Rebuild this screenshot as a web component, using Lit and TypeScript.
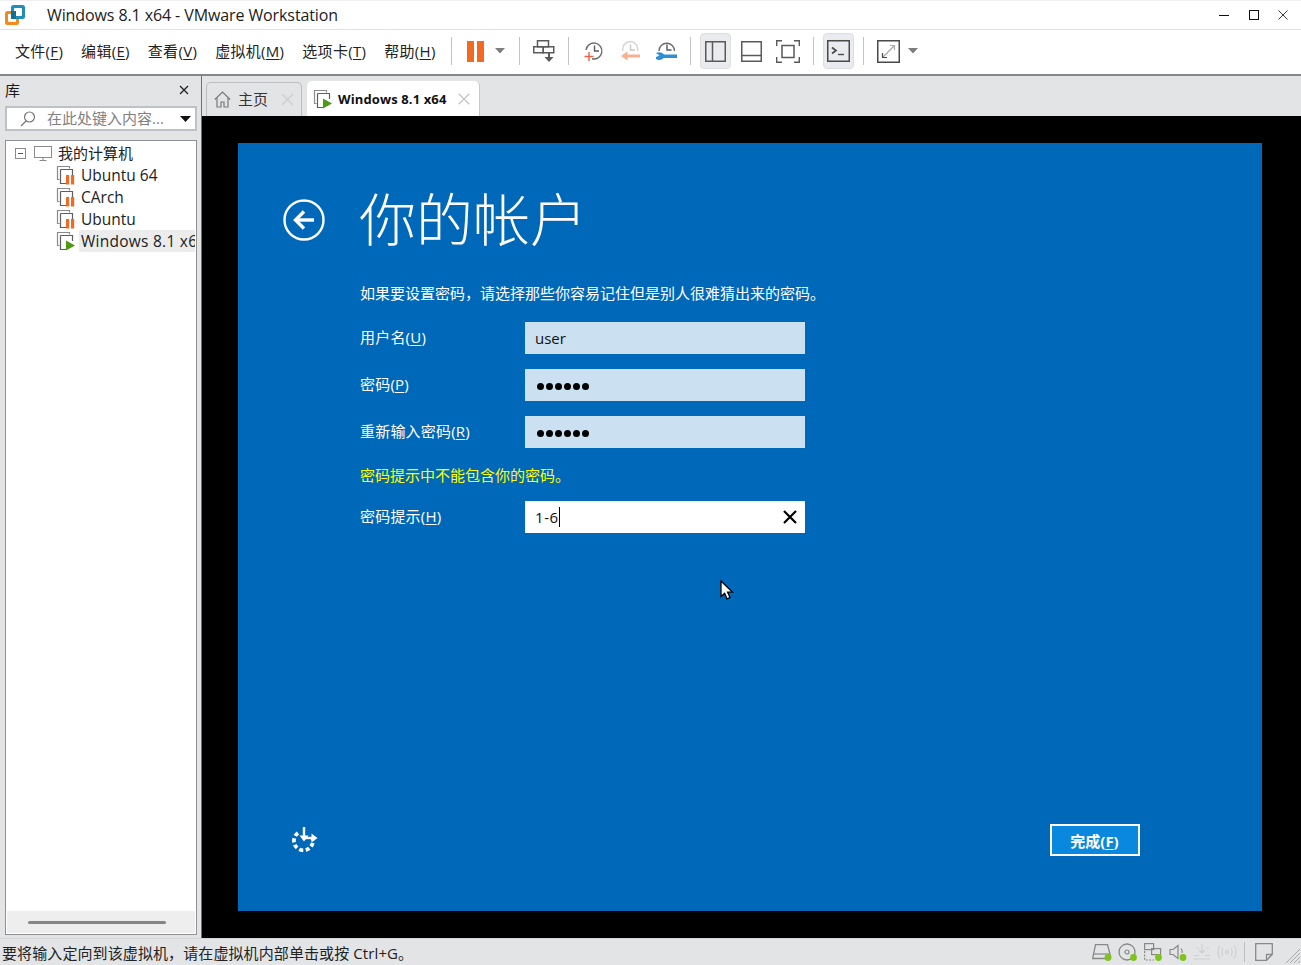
import { LitElement, html, css, svg } from "lit";
import { customElement } from "lit/decorators.js";

const vmIcon = (running: boolean) => html`<svg class="vmi" width="20" height="20" viewBox="0 0 20 20" fill="none">
  <path d="M3.5 14.5H1.5V1.5H13.5V3.5" stroke="#8a8a8a" stroke-width="1.2"/>
  <path d="M4.5 4.5H16.5V10M4.5 4.5V18.5H10" stroke="#5f5f5f" stroke-width="1.2"/>
  ${running
    ? svg`<path d="M10 9.5L19 14.5L10 19.5Z" fill="#4c9a12"/>`
    : svg`<rect x="10" y="10" width="3.2" height="9.5" fill="#f26a21"/><rect x="15" y="10" width="3.2" height="9.5" fill="#f26a21"/>`}
</svg>`;

const caret = html`<svg width="10" height="6" viewBox="0 0 10 6"><path d="M0 0H10L5 5.5Z" fill="#7d7d7d"/></svg>`;

@customElement("app-root")
export class AppRoot extends LitElement {
  static styles = css`
    :host { display: block; width: 1301px; height: 965px; overflow: hidden; background: #e3e4e6; color: #1a1a1a;
      font-family: "Open Sans", "Noto Sans CJK SC", sans-serif; font-size: 15px; }
    * { box-sizing: border-box; }
    svg { display: block; flex: none; }
    u { text-underline-offset: 2px; text-decoration-thickness: 1px; }
    .win { display: grid; grid-template-rows: 30px 46px 862px 27px; height: 965px; }

    .title { background: #fff; border-top: 1px solid #f0f0f0; border-bottom: 1px solid #e2e2e2; display: flex; align-items: center; padding: 0 0 0 5px; }
    .title .logo { margin-right: 22px; }
    .title .name { flex: 1; font-size: 16px; letter-spacing: -0.1px; color: #1c1c1c; }
    .winbtns { display: flex; align-items: center; padding-right: 13px; }
    .winbtns svg { margin-left: 20px; }
    .winbtns svg:last-child { margin-left: 19px; }

    .tools { background: #fff; border-bottom: 2px solid #85868a; display: flex; align-items: center; padding-left: 15px; padding-bottom: 2px; }
    .menu { display: flex; gap: 18px; width: 423px; white-space: nowrap; line-height: 20px; color: #222; letter-spacing: .3px; }
    .sep { width: 1px; height: 28px; background: #c4c4c4; margin: 0 13px; flex: none; }
    .pause { display: flex; align-items: center; gap: 11px; width: 41px; padding-left: 2px; }
    .hist { display: flex; align-items: center; gap: 16px; width: 95px; padding-left: 2px; }
    .view { display: flex; align-items: center; margin-left: -4px; }
    .on { width: 31px; height: 36px; background: #e9ebee; border: 1px solid #dcdee0; border-radius: 4px; display: flex; align-items: center; justify-content: center; }
    .g1 { margin-left: 10px; }
    .g2 { margin-left: 14px; }
    .onsolo { margin: 0 -4px; }
    .full { display: flex; align-items: center; gap: 8px; }

    .body { display: grid; grid-template-columns: 201px 1fr; min-height: 0; }
    .side { display: flex; flex-direction: column; padding: 0 4px 3px 5px; min-height: 0; }
    .side-h { height: 30px; display: flex; align-items: center; justify-content: space-between; padding: 0 8px 3px 0; }
    .search { height: 25px; border: 2px solid #bfc1c4; background: #fff; display: flex; align-items: center; padding-left: 13px; color: #7f8184; }
    .search span { margin: 0 0 2px 11px; flex: 1; white-space: nowrap; line-height: 20px; }
    .search svg:last-child { margin-right: 4px; }
    .tree { margin-top: 9px; flex: 1; border: 1px solid #8e9094; background: #fff; display: flex; flex-direction: column; min-height: 0; padding-top: 1px; overflow: hidden; }
    .treelist { flex: 1; }
    .row { height: 22px; display: flex; align-items: center; white-space: nowrap; overflow: hidden; padding-left: 50px; color: #222; }
    .row.root { padding-left: 9px; }
    .row.root svg:first-child { margin-right: 8px; }
    .row.root svg:nth-child(2) { margin-right: 6px; }
    .row.root span { margin-bottom: 2px; }
    .row .lbl { margin-left: 3px; padding-left: 2px; flex: 1; height: 22px; line-height: 22px; overflow: hidden; font-size: 15.5px; }
    .row .lbl.sel { background: #ececec; margin-right: 1px; letter-spacing: .25px; }
    .hscroll { height: 22px; margin: 0 1px 1px; background: #eeeeee; display: flex; align-items: center; padding-left: 21px; }
    .thumb { width: 138px; height: 3px; border-radius: 2px; background: #868686; }

    .main { border-left: 1px solid #6e6f71; display: flex; flex-direction: column; min-height: 0; }
    .tabs { height: 40px; display: flex; align-items: flex-end; gap: 5px; padding-left: 4px; }
    .tab { display: flex; align-items: center; border-radius: 5px 5px 0 0; }
    .tab.home { width: 96px; height: 34px; border: 1px solid #bcbdc0; border-bottom: 0; padding-left: 7px; color: #333; }
    .tab.home span { margin: 0 13px 3px 7px; }
    .tab.act { width: 173px; height: 35px; background: #fff; padding-left: 6px; border-right: 1px solid #c8c8c8; }
    .tab.act span { font: 700 13px "Open Sans", sans-serif; margin: 0 12px 0 5px; white-space: nowrap; letter-spacing: .12px; color: #111; }

    .stage { flex: 1; background: #000; padding: 27px 39px 27px 36px; min-height: 0; }
    .blue { position: relative; height: 768px; background: #0068b8; color: #fff; padding: 40px 0 0 45px; display: flex; flex-direction: column; }
    .head { display: flex; align-items: center; height: 74px; }
    .head h1 { margin: 0 0 8px 34px; font-weight: 300; font-size: 57px; line-height: 74px; color: #fff; font-family: "Noto Sans CJK SC", sans-serif; }
    .content { margin-left: 77px; }
    .intro { margin: 24px 0 0; line-height: 24px; white-space: nowrap; }
    .field { display: flex; align-items: center; height: 32px; margin-top: 15px; }
    .first { margin-top: 17px; }
    .field label { width: 165px; white-space: nowrap; line-height: 20px; margin-bottom: 2px; letter-spacing: .2px; }
    .input { width: 280px; height: 32px; background: #cbe0f1; color: #111; display: flex; align-items: center; padding: 0 10px; line-height: 20px; }
    .input.white { background: #fff; justify-content: space-between; padding-right: 8px; }
    .dots { display: flex; gap: 2px; margin: 2px 0 0 2px; }
    .dots i { width: 7px; height: 7px; border-radius: 50%; background: #000; }
    .caretline { border-right: 1px solid #000; height: 20px; letter-spacing: .6px; display: inline-block; }
    .warn { color: #ffff00; height: 24px; line-height: 24px; margin-top: 15px; white-space: nowrap; }
    .warn + .field { margin-top: 14px; }
    .foot { margin-top: auto; display: flex; align-items: center; justify-content: space-between; padding: 0 122px 55px 8px; }
    .done { width: 90px; height: 32px; background: #0a88e0; border: 2px solid #fff; color: #fff; display: flex; align-items: center; justify-content: center; font-weight: 700; }
    .done span { margin-right: 1px; }
    .cursor { position: absolute; left: 482px; top: 437px; }

    .status { display: flex; align-items: center; padding-left: 2px; border-top: 1px solid #d5d5d5; color: #222; }
    .status .msg { flex: 1; white-space: nowrap; letter-spacing: .1px; }
    .sicons { display: flex; align-items: center; gap: 6px; }
    .sicons .line { width: 1px; height: 20px; background: #bdbdbd; margin: 0 1px; }
    .sicons .note { margin-left: 3px; }
    .grip { margin: 7px 1px 0 12px; }
  `;

  render() {
    return html`<div class="win">
      <div class="title">
        <svg class="logo" width="20" height="20" viewBox="0 0 20 20">
          <rect x="0" y="6" width="14" height="14" rx="2.5" fill="#f28a1e"/>
          <rect x="6" y="0" width="14" height="14" rx="2.5" fill="#1f8fb8"/>
          <rect x="9" y="3" width="8" height="8" rx="1" fill="#fff"/>
          <path d="M3 9H6V14H11V17H4.5A1.5 1.5 0 0 1 3 15.5Z" fill="#fff"/>
          <rect x="6" y="6" width="5" height="8" fill="#0e6f98"/>
        </svg>
        <div class="name">Windows 8.1 x64 - VMware Workstation</div>
        <div class="winbtns">
          <svg width="10" height="10" viewBox="0 0 10 10"><path d="M0 5.5H10" stroke="#111" stroke-width="1"/></svg>
          <svg width="10" height="10" viewBox="0 0 10 10" fill="none"><rect x=".5" y=".5" width="9" height="9" stroke="#111"/></svg>
          <svg width="10" height="10" viewBox="0 0 10 10"><path d="M.5 .5L9.5 9.5M9.5 .5L.5 9.5" stroke="#222" stroke-width=".9"/></svg>
        </div>
      </div>

      <div class="tools">
        <div class="menu">
          <span>文件(<u>F</u>)</span><span>编辑(<u>E</u>)</span><span>查看(<u>V</u>)</span><span>虚拟机(<u>M</u>)</span><span>选项卡(<u>T</u>)</span><span>帮助(<u>H</u>)</span>
        </div>
        <div class="sep"></div>
        <div class="pause">
          <svg width="17" height="21" viewBox="0 0 17 21"><rect width="7" height="21" fill="#f26a21"/><rect x="10" width="7" height="21" fill="#f26a21"/></svg>
          ${caret}
        </div>
        <div class="sep"></div>
        <svg width="22" height="22" viewBox="0 0 22 22" fill="none" stroke="#5a5a5a" stroke-width="1.5">
          <rect x="4.5" y=".75" width="11" height="6"/><rect x=".75" y="6.75" width="9.5" height="6"/><rect x="10.25" y="6.75" width="10.5" height="6"/>
          <path d="M16 13V18" stroke-width="2"/><path d="M11.5 17H20.5L16 22Z" fill="#5a5a5a" stroke="none"/>
        </svg>
        <div class="sep"></div>
        <div class="hist">
          <svg width="20" height="20" viewBox="0 0 20 20" fill="none">
            <path d="M2 9A8 8 0 1 1 8 17.8" stroke="#6a6a6a" stroke-width="1.4"/><path d="M10.5 4.5V10H15" stroke="#5a5a5a" stroke-width="1.4"/>
            <path d="M5 11V20M.5 15.5H9.5" stroke="#e8643c" stroke-width="1.4"/>
          </svg>
          <svg width="20" height="20" viewBox="0 0 20 20" fill="none">
            <path d="M3 10A7.5 7.5 0 1 1 17.5 10" stroke="#d4d4d4" stroke-width="1.4"/><path d="M10.5 3.5V9H15" stroke="#c8c8c8" stroke-width="1.4"/>
            <path d="M20 15H6" stroke="#f9b08f" stroke-width="3"/><path d="M7.5 10.5L1 15L7.5 19.5Z" fill="#f9b08f"/>
          </svg>
          <svg width="21" height="20" viewBox="0 0 21 20" fill="none">
            <path d="M3 10A7.5 7.5 0 1 1 18.5 10" stroke="#6a6a6a" stroke-width="1.4"/><path d="M11 3.5V9H15.5" stroke="#5a5a5a" stroke-width="1.4"/>
            <path d="M5 13.5H21V17H5Z" fill="#2d8fd5"/><path d="M0 12L3.5 14.5L0 16V18C3 20 7 19 8 16V13.5C6 11 2 10.5 0 12Z" fill="#2d8fd5"/>
          </svg>
        </div>
        <div class="sep"></div>
        <div class="view">
          <div class="on">
            <svg width="21" height="21" viewBox="0 0 21 21" fill="none" stroke="#5a5a5a" stroke-width="1.5"><rect x=".75" y=".75" width="19.5" height="19.5"/><path d="M7.5 1V20"/></svg>
          </div>
          <svg class="g1" width="21" height="21" viewBox="0 0 21 21" fill="none" stroke="#5a5a5a" stroke-width="1.5"><rect x=".75" y=".75" width="19.5" height="19.5"/><path d="M1 14.5H20"/></svg>
          <svg class="g2" width="24" height="23" viewBox="0 0 24 23" fill="none" stroke="#5a5a5a" stroke-width="1.4"><path d="M.7 6V.7H6M18 .7H23.3V6M.7 17V22.3H6M18 22.3H23.3V17"/><rect x="6" y="5.5" width="12" height="12" stroke-width="1.5"/></svg>
        </div>
        <div class="sep"></div>
        <div class="on onsolo">
          <svg width="23" height="22" viewBox="0 0 23 22" fill="none"><rect x=".75" y=".75" width="21.5" height="20.5" stroke="#4a4a4a" stroke-width="1.5"/><path d="M5 7.5L9 10.5L5 13.5" stroke="#4a4a4a" stroke-width="1.7"/><path d="M11 14.5H17" stroke="#4a4a4a" stroke-width="1.4"/></svg>
        </div>
        <div class="sep"></div>
        <div class="full">
          <svg width="23" height="23" viewBox="0 0 23 23" fill="none"><rect x=".75" y=".75" width="21.5" height="21.5" stroke="#4a4a4a" stroke-width="1.5"/><path d="M6 17L17 6" stroke="#a9a9a9" stroke-width="1.2"/><path d="M13 5.5H17.5V10" stroke="#a9a9a9" stroke-width="1.2"/><path d="M5.5 13V17.5H10" stroke="#4a4a4a" stroke-width="1.2"/></svg>
          ${caret}
        </div>
      </div>

      <div class="body">
        <div class="side">
          <div class="side-h"><span>库</span>
            <svg width="10" height="10" viewBox="0 0 10 10"><path d="M1 1L9 9M9 1L1 9" stroke="#222" stroke-width="1.3"/></svg></div>
          <div class="search">
            <svg width="16" height="16" viewBox="0 0 16 16" fill="none" stroke="#777" stroke-width="1.2"><circle cx="9.5" cy="6" r="5"/><path d="M6 10L1 15"/></svg>
            <span>在此处键入内容...</span>
            <svg width="11" height="6" viewBox="0 0 11 6"><path d="M0 0H11L5.5 6Z" fill="#111"/></svg>
          </div>
          <div class="tree">
            <div class="treelist">
              <div class="row root">
                <svg width="11" height="11" viewBox="0 0 11 11" fill="none"><rect x=".5" y=".5" width="10" height="10" stroke="#8a8a8a"/><path d="M3 5.5H8" stroke="#555"/></svg>
                <svg width="18" height="15" viewBox="0 0 18 15" fill="none" stroke="#8a8a8a"><rect x=".5" y=".5" width="17" height="11"/><path d="M9 12V14M5.5 14.5H12.5"/></svg>
                <span>我的计算机</span>
              </div>
              <div class="row">${vmIcon(false)}<span class="lbl">Ubuntu 64</span></div>
              <div class="row">${vmIcon(false)}<span class="lbl">CArch</span></div>
              <div class="row">${vmIcon(false)}<span class="lbl">Ubuntu</span></div>
              <div class="row">${vmIcon(true)}<span class="lbl sel">Windows 8.1 x64</span></div>
            </div>
            <div class="hscroll"><div class="thumb"></div></div>
          </div>
        </div>

        <div class="main">
          <div class="tabs">
            <div class="tab home">
              <svg width="17" height="17" viewBox="0 0 17 17" fill="none" stroke="#7a7a7a" stroke-width="1.2"><path d="M.8 8.5L8.5 1L16.2 8.5"/><path d="M3 7V16H7V11H10V16H14V7"/></svg>
              <span>主页</span>
              <svg width="13" height="13" viewBox="0 0 13 13"><path d="M1 1L12 12M12 1L1 12" stroke="#cfcfcf" stroke-width="1.4"/></svg>
            </div>
            <div class="tab act">
              ${vmIcon(true)}
              <span>Windows 8.1 x64</span>
              <svg width="12" height="12" viewBox="0 0 12 12"><path d="M.7 .7L11.3 11.3M11.3 .7L.7 11.3" stroke="#c4c4c4" stroke-width="1.3"/></svg>
            </div>
          </div>
          <div class="stage">
            <div class="blue">
              <div class="head">
                <svg width="42" height="42" viewBox="0 0 42 42" fill="none" stroke="#fff">
                  <circle cx="21" cy="21" r="19.5" stroke-width="2.4"/>
                  <path d="M31 21H14" stroke-width="3.4"/><path d="M21 12.5L12.5 21L21 29.5" stroke-width="3.4"/>
                </svg>
                <h1>你的帐户</h1>
              </div>
              <div class="content">
                <p class="intro">如果要设置密码，请选择那些你容易记住但是别人很难猜出来的密码。</p>
                <div class="field first"><label>用户名(<u>U</u>)</label><div class="input">user</div></div>
                <div class="field"><label>密码(<u>P</u>)</label><div class="input"><div class="dots"><i></i><i></i><i></i><i></i><i></i><i></i></div></div></div>
                <div class="field"><label>重新输入密码(<u>R</u>)</label><div class="input"><div class="dots"><i></i><i></i><i></i><i></i><i></i><i></i></div></div></div>
                <div class="warn">密码提示中不能包含你的密码。</div>
                <div class="field"><label>密码提示(<u>H</u>)</label><div class="input white"><span class="caretline">1-6</span>
                  <svg width="14" height="14" viewBox="0 0 14 14"><path d="M1 1L13 13M13 1L1 13" stroke="#000" stroke-width="2.2"/></svg></div></div>
              </div>
              <div class="foot">
                <svg width="28" height="28" viewBox="0 0 28 28" fill="none" stroke="#fff">
                  <path d="M7 7A9.5 9.5 0 1 0 21.5 12" stroke-width="3.8" stroke-dasharray="4 2.5"/>
                  <path d="M13 1V14" stroke-width="2.4"/><path d="M8.5 9.5L13 15.5L17.5 9.5Z" fill="#fff" stroke="none"/>
                  <path d="M14 12H22" stroke-width="2.4"/><path d="M20.5 7.5L26.5 12L20.5 16.5Z" fill="#fff" stroke="none"/>
                </svg>
                <div class="done"><span>完成(<u>F</u>)</span></div>
              </div>
              <svg class="cursor" width="14" height="20" viewBox="0 0 14 20">
                <path d="M1 1V16.5L4.6 13.4L7 18.8L10 17.5L7.6 12.2H12.6Z" fill="#fff" stroke="#000" stroke-width="1.3"/>
              </svg>
            </div>
          </div>
        </div>
      </div>

      <div class="status">
        <div class="msg">要将输入定向到该虚拟机，请在虚拟机内部单击或按 Ctrl+G。</div>
        <div class="sicons">
          <svg width="20" height="18" viewBox="0 0 20 18" fill="none"><path d="M.7 15.5L3.5 1.7H15.5L18.5 13V15.5Z" stroke="#888" stroke-width="1.3"/><path d="M1 11H18" stroke="#888" stroke-width="1.2"/><circle cx="16" cy="14.5" r="3.4" fill="#7fc41c"/></svg>
          <svg width="20" height="18" viewBox="0 0 20 18" fill="none"><circle cx="9" cy="9" r="8" stroke="#888" stroke-width="1.3"/><circle cx="9" cy="9" r="2" stroke="#888" stroke-width="1.2"/><circle cx="15.5" cy="14.5" r="3.4" fill="#7fc41c"/></svg>
          <svg width="19" height="18" viewBox="0 0 19 18" fill="none" stroke="#888" stroke-width="1.2"><rect x=".6" y=".6" width="9" height="6"/><rect x="7.6" y="5.6" width="9" height="6"/><path d="M.6 8V17H10" stroke-dasharray="2 1.4"/><circle cx="14.5" cy="14.5" r="3.4" fill="#7fc41c" stroke="none"/></svg>
          <svg width="18" height="18" viewBox="0 0 18 18" fill="none" stroke="#888" stroke-width="1.2"><path d="M1 6.5H4L9 2.5V15.5L4 11.5H1Z"/><path d="M12 5.5C13.5 7.5 13.5 9 13 10"/><circle cx="14" cy="14.5" r="3.4" fill="#7fc41c" stroke="none"/></svg>
          <svg width="18" height="18" viewBox="0 0 18 18" fill="none" stroke="#cfcfcf" stroke-width="1.2"><path d="M1 16H17M1 12.5H6M12 12.5H17M9 1V9M6 7L9 10L12 7M3 5H6M13 5H16"/></svg>
          <svg width="20" height="18" viewBox="0 0 20 18" fill="none" stroke="#cfcfcf" stroke-width="1.2"><circle cx="10" cy="9" r="1.6"/><path d="M6 5C4.5 7 4.5 11 6 13M14 5C15.5 7 15.5 11 14 13M3 2.5C.3 6 .3 12 3 15.5M17 2.5C19.7 6 19.7 12 17 15.5"/></svg>
          <div class="line"></div>
          <svg class="note" width="18" height="18" viewBox="0 0 18 18" fill="none" stroke="#888" stroke-width="1.3"><path d="M.7 .7H17.3V11.5L11.5 17.3H.7Z"/><path d="M17 11.5H11.5V17"/></svg>
        </div>
        <svg class="grip" width="15" height="15" viewBox="0 0 15 15" stroke="#a9a9a9" stroke-width="1"><path d="M1 15L15 1M5 15L15 5M9 15L15 9M13 15L15 13"/></svg>
      </div>
    </div>`;
  }
}
